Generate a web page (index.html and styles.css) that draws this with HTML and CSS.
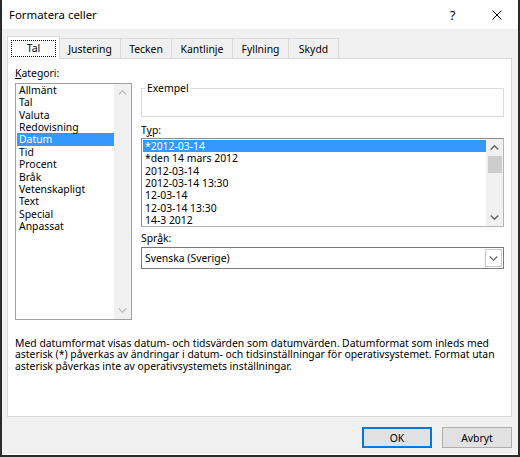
FILE: index.html
```html
<!DOCTYPE html>
<html lang="sv">
<head>
<meta charset="utf-8">
<title>Formatera celler</title>
<link rel="stylesheet" href="styles.css">
</head>
<body>
<div class="window">
  <div class="titlebar">
    <span class="title">Formatera celler</span>
    <span class="caption-btn help">?</span>
    <span class="caption-btn close">
      <svg width="10" height="10" viewBox="0 0 10 10"><path d="M0.5 0.5L9.5 9.5M9.5 0.5L0.5 9.5" stroke="#000" stroke-width="1" fill="none"/></svg>
    </span>
  </div>

  <div class="body">
    <div class="tabs">
      <div class="tab tab-tal active"><span class="focus">Tal</span></div>
      <div class="tab tab-justering">Justering</div>
      <div class="tab tab-tecken">Tecken</div>
      <div class="tab tab-kantlinje">Kantlinje</div>
      <div class="tab tab-fyllning">Fyllning</div>
      <div class="tab tab-skydd">Skydd</div>
    </div>

    <div class="panel">
      <div class="columns">
        <div class="col-left">
          <div class="label label-kategori"><u>K</u>ategori:</div>
          <div class="listbox cat">
            <ul class="items">
              <li>Allmänt</li>
              <li>Tal</li>
              <li>Valuta</li>
              <li>Redovisning</li>
              <li class="selected">Datum</li>
              <li>Tid</li>
              <li>Procent</li>
              <li>Bråk</li>
              <li>Vetenskapligt</li>
              <li>Text</li>
              <li>Special</li>
              <li>Anpassat</li>
            </ul>
            <div class="scrollbar disabled">
              <div class="sb-btn"><svg width="9" height="5" viewBox="0 0 9 5"><polyline points="0.7,4.5 4.5,0.8 8.3,4.5" fill="none" stroke="currentColor" stroke-width="1.4"/></svg></div>
              <div class="sb-track"></div>
              <div class="sb-btn"><svg width="9" height="5" viewBox="0 0 9 5"><polyline points="0.7,0.5 4.5,4.2 8.3,0.5" fill="none" stroke="currentColor" stroke-width="1.4"/></svg></div>
            </div>
          </div>
        </div>

        <div class="col-right">
          <div class="example">
            <span class="example-label">Exempel</span>
          </div>
          <div class="label label-typ">T<u>y</u>p:</div>
          <div class="listbox typ">
            <ul class="items">
              <li class="selected">*2012-03-14</li>
              <li>*den 14 mars 2012</li>
              <li>2012-03-14</li>
              <li>2012-03-14 13:30</li>
              <li>12-03-14</li>
              <li>12-03-14 13:30</li>
              <li>14-3 2012</li>
            </ul>
            <div class="scrollbar">
              <div class="sb-btn"><svg width="9" height="5" viewBox="0 0 9 5"><polyline points="0.7,4.5 4.5,0.8 8.3,4.5" fill="none" stroke="currentColor" stroke-width="1.4"/></svg></div>
              <div class="sb-thumb"></div>
              <div class="sb-track"></div>
              <div class="sb-btn"><svg width="9" height="5" viewBox="0 0 9 5"><polyline points="0.7,0.5 4.5,4.2 8.3,0.5" fill="none" stroke="currentColor" stroke-width="1.4"/></svg></div>
            </div>
          </div>
          <div class="label label-sprak">Spr<u>å</u>k:</div>
          <div class="select">
            <span class="select-value">Svenska (Sverige)</span>
            <span class="select-btn"><svg width="9" height="5" viewBox="0 0 9 5"><polyline points="0.7,0.5 4.5,4.2 8.3,0.5" fill="none" stroke="#606060" stroke-width="1.1"/></svg></span>
          </div>
        </div>
      </div>

      <p class="desc">Med datumformat visas datum- och tidsvärden som datumvärden. Datumformat som inleds med asterisk (*) påverkas av ändringar i datum- och tidsinställningar för operativsystemet. Format utan asterisk påverkas inte av operativsystemets inställningar.</p>
    </div>

    <div class="footer">
      <button class="btn default" type="button">OK</button>
      <button class="btn" type="button">Avbryt</button>
    </div>
  </div>
</div>
</body>
</html>
```

FILE: styles.css
```css
body {
  margin: 0;
  font-family: "Noto Sans", "Open Sans", sans-serif;
  font-size: 10.4px;
  color: #000;
  background: #fff;
}

/* dialog frame */
.window {
  width: 520px;
  height: 457px;
  box-sizing: border-box;
  border: 2px solid #2b2b2b;
  border-top: 0;
  display: flex;
  flex-direction: column;
  background: #f0f0f0;
}

.titlebar {
  flex: none;
  height: 29px;
  background: #fff;
  display: flex;
  align-items: center;
  padding-left: 7px;
}

.title {
  flex: 1;
  font-size: 11.4px;
  line-height: 15px;
}

.caption-btn {
  display: flex;
  align-items: center;
  justify-content: center;
  height: 29px;
}

.help {
  width: 45px;
  font-size: 13px;
}

.close {
  width: 43px;
}

.body {
  flex: 1;
  display: flex;
  flex-direction: column;
  padding: 7px 6px 0 5px;
  box-shadow: inset 0 -1px 0 #fff;
}

/* tab strip */
.tabs {
  display: flex;
  align-items: flex-end;
  height: 22px;
}

.tab {
  box-sizing: border-box;
  height: 20px;
  margin-left: -1px;
  border: 1px solid #d9d9d9;
  border-bottom: 0;
  background: #f0f0f0;
  display: flex;
  align-items: center;
  justify-content: center;
  line-height: 14px;
}

.tab.active {
  position: relative;
  z-index: 1;
  height: 23px;
  margin-left: 0;
  margin-bottom: -1px;
  background: #fff;
  align-items: flex-start;
  padding-top: 3px;
}

.tab .focus {
  display: block;
  box-sizing: border-box;
  width: 45px;
  height: 17px;
  border: 1px dotted #000;
  text-align: center;
  line-height: 14px;
}

.tab-tal { width: 53px; }
.tab-justering { width: 62px; }
.tab-tecken { width: 52px; }
.tab-kantlinje { width: 62px; }
.tab-fyllning { width: 57px; }
.tab-skydd { width: 51px; }

/* tab page */
.panel {
  box-sizing: border-box;
  width: 505px;
  height: 359px;
  border: 1px solid #d9d9d9;
  background: #fff;
  padding: 7px 7px 0;
}

.columns {
  display: grid;
  grid-template-columns: 117px 363px;
  column-gap: 9px;
  align-items: start;
}

.label {
  height: 14px;
  line-height: 14px;
  white-space: nowrap;
}

.label u {
  text-underline-offset: 1px;
}

.label-kategori { margin-bottom: 3px; }
.label-typ { margin-top: 6px; }
.label-sprak { margin-top: 4px; }

/* list boxes */
.listbox {
  box-sizing: border-box;
  display: flex;
  border: 1px solid #a0a0a0;
  background: #fff;
}

.listbox.cat { height: 237px; }

.listbox.typ {
  height: 89px;
  margin-top: 1px;
  border-color: #8c8c8c #b4b4b4 #b4b4b4 #8c8c8c;
}

.items {
  flex: 1;
  list-style: none;
  margin: 0;
  padding: 0 0 0 1px;
}

.typ .items { padding-top: 1px; }

.items li {
  height: 12.36px;
  line-height: 12.36px;
  padding-left: 2px;
  white-space: nowrap;
}

.items li.selected {
  background: #3399ff;
  color: #fff;
}

.scrollbar {
  flex: none;
  width: 17px;
  display: flex;
  flex-direction: column;
  background: #f0f0f0;
  color: #606060;
}

.scrollbar.disabled { color: #bfbfbf; }

.sb-btn {
  height: 17px;
  display: flex;
  align-items: center;
  justify-content: center;
}

.sb-btn svg { display: block; }

.sb-track { flex: 1; }

.sb-thumb {
  height: 17px;
  margin: 0 1px 0 2px;
  background: #cdcdcd;
}

/* sample group box */
.example {
  box-sizing: border-box;
  height: 29px;
  margin-top: 22px;
  border: 1px solid #dcdcdc;
}

.example-label {
  display: block;
  width: fit-content;
  margin: -7px 0 0 4px;
  padding: 0 1px;
  line-height: 12px;
  background: #fff;
}

/* language combo */
.select {
  box-sizing: border-box;
  height: 22px;
  margin-top: 2px;
  border: 1px solid #7a7a7a;
  display: flex;
  align-items: center;
  background: #fff;
}

.select-value {
  flex: 1;
  padding-left: 3px;
  line-height: 14px;
}

.select-btn {
  box-sizing: border-box;
  width: 17px;
  height: 18px;
  margin-right: 1px;
  border: 1px solid #c8c8c8;
  display: flex;
  align-items: center;
  justify-content: center;
}

.select-btn svg { display: block; }

.desc {
  margin: 17.5px 0 0;
  line-height: 11.7px;
}

/* dialog buttons */
.footer {
  display: flex;
  justify-content: flex-end;
  gap: 10px;
  margin-top: 10px;
}

.btn {
  box-sizing: border-box;
  width: 70px;
  height: 21px;
  padding: 0;
  border: 1px solid #adadad;
  background: #e1e1e1;
  font: inherit;
  color: #000;
}

.btn.default {
  border-color: #0078d7;
  box-shadow: inset 0 0 0 1px #0078d7;
}
```
